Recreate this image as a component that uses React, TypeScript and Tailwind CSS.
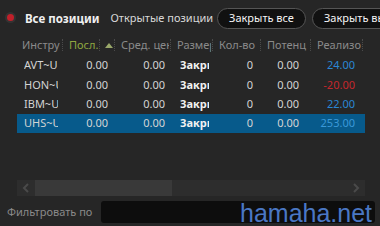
const cols = [
  { w: 45, label: "Инстру" },
  { w: 52, label: "Посл." },
  { w: 56, label: "Сред. цен" },
  { w: 42, label: "Размер" },
  { w: 48, label: "Кол-во" },
  { w: 50, label: "Потенц" },
  { w: 52, label: "Реализов" },
];

const rows = [
  { sym: "AVT~U", real: "24.00", tone: "pos" },
  { sym: "HON~U", real: "-20.00", tone: "neg" },
  { sym: "IBM~U", real: "22.00", tone: "pos" },
  { sym: "UHS~U", real: "253.00", tone: "sel" },
];

function Sep() {
  return <div className="h-[12px] w-0 shrink-0 border-l border-dotted border-[#4a4a4a]" />;
}

export default function App() {
  return (
    <div
      className="w-[380px] h-[226px] bg-[#262626] overflow-hidden text-[11px] relative"
      style={{ fontFamily: '"Noto Sans", "DejaVu Sans", sans-serif' }}
    >
      {/* tabs */}
      <div className="h-[36px] pt-[1px] flex items-center pl-[7px] whitespace-nowrap">
        <span className="w-[7px] h-[7px] shrink-0 rounded-full bg-[#c0202a] ring-2 ring-[#333] mr-[11px] mb-[3px]" />
        <span className="font-bold text-[11.5px] text-[#f0f0f0] mr-[11px]">Все позиции</span>
        <span className="text-[#d8d8d8] mr-[4px]">Открытые позиции</span>
        <span className="h-[21px] px-[11px] flex items-center rounded-full bg-[#111] border border-[#555] text-[#f5f5f5] mr-[6px]">
          Закрыть все
        </span>
        <span className="h-[21px] px-[11px] flex items-center rounded-full bg-[#111] border border-[#555] text-[#f5f5f5]">
          Закрыть выбранные
        </span>
      </div>

      {/* header */}
      <div className="ml-[17px] h-[18px] flex items-center text-[#8a8a8a] whitespace-nowrap">
        {cols.map((c, i) => (
          <div key={i} className="flex items-center shrink-0" style={{ width: c.w }}>
            {i > 0 && <Sep />}
            {i === 1 ? (
              <>
                <span className="pl-[6px] text-[#8fa640] w-[36px] overflow-hidden">{c.label}</span>
                <Sep />
                <span className="ml-[5px] w-0 h-0 border-x-[4px] border-x-transparent border-b-[5px] border-b-[#9aa86a]" />
              </>
            ) : (
              <span className={`${i === 0 ? "pl-[5px]" : "pl-[6px]"} overflow-hidden`} style={{ width: c.w - 2 }}>
                {c.label}
              </span>
            )}
          </div>
        ))}
        <Sep />
      </div>

      {/* rows */}
      <div className="ml-[17px] w-[348px] pt-[2px]">
        {rows.map((r, i) => (
          <div
            key={i}
            className={`h-[19.3px] flex items-center whitespace-nowrap text-[#d4d4d4] ${r.tone === "sel" ? "bg-[#075a8b]" : ""}`}
          >
            <div className="w-[45px] pl-[7px] shrink-0">
              <div className="w-[34px] overflow-hidden">{r.sym}</div>
            </div>
            <div className="w-[52px] pr-[6px] text-right shrink-0">0.00</div>
            <div className="w-[56px] pr-[5px] text-right shrink-0">0.00</div>
            <div className="w-[42px] pl-[10px] shrink-0">
              <div className="w-[29px] overflow-hidden font-bold text-[#f2f2f2]">Закрыть</div>
            </div>
            <div className="w-[48px] pr-[7px] text-right shrink-0">0</div>
            <div className="w-[50px] pr-[11px] text-right shrink-0">0.00</div>
            <div
              className={`w-[52px] pr-[7px] text-right shrink-0 ${
                r.tone === "neg" ? "text-[#c4262c]" : r.tone === "sel" ? "text-[#3a98d8]" : "text-[#2a86d4]"
              }`}
            >
              {r.real}
            </div>
          </div>
        ))}
      </div>

      <div className="h-[47px]" />

      {/* scrollbar */}
      <div className="ml-[17px] w-[348px] h-[16px] bg-[#2d2d2d] flex items-center">
        <svg width="18" height="16" viewBox="0 0 18 16" className="shrink-0">
          <path d="M11 4 L7 8 L11 12" stroke="#4a4a4a" strokeWidth="2" fill="none" />
        </svg>
        <div className="w-[137px] h-[16px] bg-[#393939]" />
        <div className="flex-1" />
        <svg width="18" height="16" viewBox="0 0 18 16" className="shrink-0">
          <path d="M7 4 L11 8 L7 12" stroke="#4a4a4a" strokeWidth="2" fill="none" />
        </svg>
      </div>

      {/* filter */}
      <div className="mt-[5px] flex items-center h-[22px]">
        <span className="pl-[7px] w-[101px] text-[#8a8a8a] whitespace-nowrap">Фильтровать по</span>
        <div className="w-[274px] h-[22px] bg-[#0d0d0d] rounded-[3px]" />
      </div>

      <div
        className="absolute left-[240px] top-[201px] text-[25px] text-[#4a77c4] leading-none"
        style={{ fontFamily: '"Liberation Sans", Arial, sans-serif' }}
      >
        hamaha.net
      </div>
    </div>
  );
}
